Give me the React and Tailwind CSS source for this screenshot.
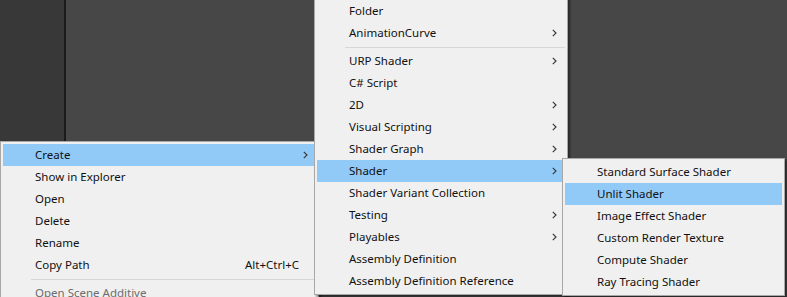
import React from 'react'

const MENU1 = [
  { label: 'Create', sub: true, active: true },
  { label: 'Show in Explorer' },
  { label: 'Open' },
  { label: 'Delete' },
  { label: 'Rename' },
  { label: 'Copy Path', shortcut: 'Alt+Ctrl+C' },
  { sep: true },
  { label: 'Open Scene Additive', disabled: true },
]

const MENU2 = [
  { label: 'Folder' },
  { label: 'AnimationCurve', sub: true },
  { sep: true },
  { label: 'URP Shader', sub: true },
  { label: 'C# Script' },
  { label: '2D', sub: true },
  { label: 'Visual Scripting', sub: true },
  { label: 'Shader Graph', sub: true },
  { label: 'Shader', sub: true, active: true },
  { label: 'Shader Variant Collection' },
  { label: 'Testing', sub: true },
  { label: 'Playables', sub: true },
  { label: 'Assembly Definition' },
  { label: 'Assembly Definition Reference' },
]

const MENU3 = [
  { label: 'Standard Surface Shader' },
  { label: 'Unlit Shader', active: true },
  { label: 'Image Effect Shader' },
  { label: 'Custom Render Texture' },
  { label: 'Compute Shader' },
  { label: 'Ray Tracing Shader' },
]

function Chevron() {
  return (
    <svg width="5" height="8" viewBox="0 0 5 8" className="shrink-0">
      <path d="M0.8 0.8 L4 4 L0.8 7.2" fill="none" stroke="#3a3a3a" strokeWidth="1.2" />
    </svg>
  )
}

function MenuItems({ items }) {
  return items.map((it, i) =>
    it.sep ? (
      <div key={i} className="h-[6px] flex items-center pl-[28px]">
        <div className="h-px w-full bg-[#d7d7d7]" />
      </div>
    ) : (
      <div
        key={i}
        className={`h-[22px] flex items-center pl-[32px] pr-[8px] ${it.active ? 'bg-[#91c9f7]' : ''} ${it.disabled ? 'text-[#6d6d6d]' : 'text-[#111]'}`}
      >
        <span className="flex-1 whitespace-nowrap">{it.label}</span>
        {it.shortcut && <span className="whitespace-nowrap mr-[9px]">{it.shortcut}</span>}
        {it.sub && <Chevron />}
      </div>
    )
  )
}

export default function App() {
  return (
    <div
      className="relative w-[787px] h-[297px] overflow-hidden flex text-[11.5px] leading-none"
      style={{ fontFamily: '"Noto Sans", "Open Sans", sans-serif' }}
    >
      <div className="w-[64px] bg-[#383838]" />
      <div className="w-[2px] bg-[#1b1b1b]" />
      <div className="flex-1 bg-[#474747]" />

      {/* root context menu */}
      <div className="absolute left-0 top-[141px] w-[319px] bg-[#f0f0f0] border border-[#a8a8a8] p-[2px] shadow-[2px_2px_2px_rgba(0,0,0,0.45)]">
        <MenuItems items={MENU1} />
      </div>

      {/* Create submenu */}
      <div className="absolute left-[314px] top-[-3px] w-[254px] bg-[#f0f0f0] border border-[#a8a8a8] p-[2px] shadow-[2px_2px_2px_rgba(0,0,0,0.45)]">
        <MenuItems items={MENU2} />
      </div>

      {/* Shader submenu */}
      <div className="absolute left-[562px] top-[158px] w-[223px] bg-[#f0f0f0] border border-[#a8a8a8] p-[2px] shadow-[2px_2px_2px_rgba(0,0,0,0.45)]">
        <MenuItems items={MENU3} />
      </div>
    </div>
  )
}
